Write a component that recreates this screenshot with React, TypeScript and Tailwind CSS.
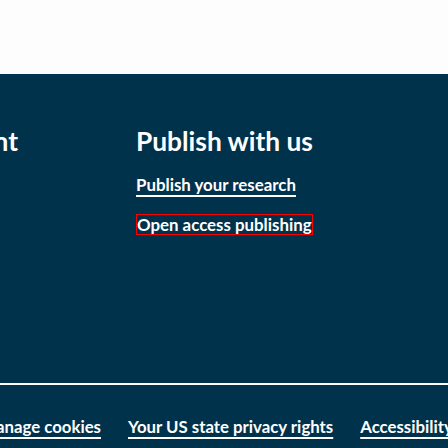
import { useLayoutEffect, useRef } from 'react';

function useFit(target: number) {
  const box = useRef<HTMLDivElement>(null);
  const probe = useRef<HTMLSpanElement>(null);
  useLayoutEffect(() => {
    const fit = () => {
      const b = box.current;
      const p = probe.current;
      if (!b || !p) return;
      b.style.fontSize = '100px';
      const m = p.getBoundingClientRect().width;
      if (m > 0) b.style.fontSize = `${((100 * target) / m).toFixed(2)}px`;
    };
    fit();
    const fonts = (document as any).fonts;
    if (fonts && fonts.ready) fonts.ready.then(fit);
    const t1 = setTimeout(fit, 30);
    const t2 = setTimeout(fit, 200);
    return () => {
      clearTimeout(t1);
      clearTimeout(t2);
    };
  }, [target]);
  return [box, probe] as const;
}

const link = 'underline underline-offset-[4px] decoration-[1.5px]';

export default function App() {
  const font = { fontFamily: 'Lato, "Noto Sans", sans-serif' };
  const [headBox, headProbe] = useFit(177);
  const [listBox, listProbe] = useFit(160);
  const [footBox, footProbe] = useFit(205.5);

  return (
    <div className="w-[448px] h-[448px] overflow-hidden bg-[#01324b] text-white" style={font}>
      <div className="h-[74px] bg-[#fdfdfd]" />
      <div className="pt-[51px]">
        <div ref={headBox} className="flex whitespace-nowrap text-[28px] font-bold">
          <div dir="rtl" className="w-[18px] shrink-0">
            <h3 className="leading-[32px]">Discover content</h3>
          </div>
          <div className="ml-[118px] flex flex-col shrink-0">
            <h3 className="leading-[32px]">
              <span ref={headProbe}>Publish with us</span>
            </h3>
            <ul ref={listBox} className="mt-[16px] flex flex-col gap-[17px] text-[17px] font-bold">
              <li className="leading-[24px]">
                <a ref={listProbe} className={link}>
                  Publish your research
                </a>
              </li>
              <li>
                <a className="block w-[177px] h-[21px] overflow-hidden border border-[#ff0000] leading-[19px]">
                  Open access publishing
                </a>
              </li>
            </ul>
          </div>
        </div>
        <div className="mt-[148px] h-[2px] bg-white" />
        <div ref={footBox} className="mt-[30px] flex whitespace-nowrap text-[17px] leading-[24px] font-bold">
          <div dir="rtl" className="w-[101px] shrink-0">
            <a className={link}>Manage cookies</a>
          </div>
          <a ref={footProbe} className={`ml-[27px] shrink-0 ${link}`}>
            Your US state privacy rights
          </a>
          <a className={`ml-[27px] shrink-0 ${link}`}>Accessibility statement</a>
        </div>
      </div>
    </div>
  );
}
